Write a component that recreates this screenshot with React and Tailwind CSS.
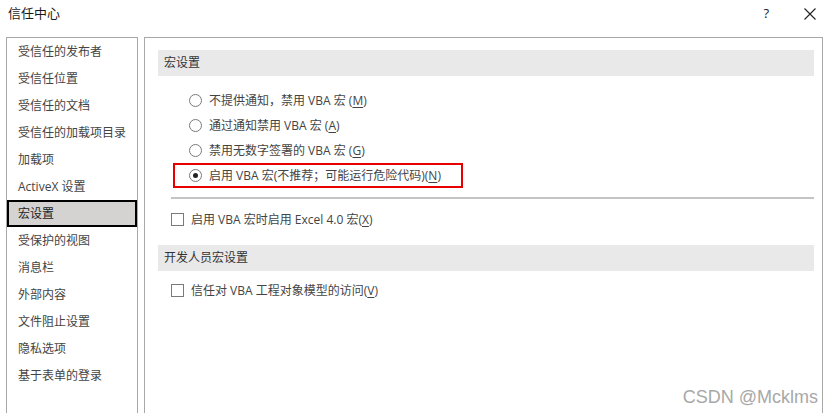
import React from "react";

const navItems = [
  "受信任的发布者",
  "受信任位置",
  "受信任的文档",
  "受信任的加载项目录",
  "加载项",
  "ActiveX 设置",
  "宏设置",
  "受保护的视图",
  "消息栏",
  "外部内容",
  "文件阻止设置",
  "隐私选项",
  "基于表单的登录",
];

function Radio({ checked }) {
  return (
    <span className="relative flex h-[13px] w-[13px] shrink-0 items-center justify-center rounded-full border border-[#7a7a7a] bg-white">
      {checked && <span className="h-[5px] w-[5px] rounded-full bg-[#222]" />}
    </span>
  );
}

function Check() {
  return <span className="h-[13px] w-[13px] shrink-0 border border-[#7a7a7a] bg-white" />;
}

function Acc({ k }) {
  return (
    <span>
      (<span className="underline underline-offset-2">{k}</span>)
    </span>
  );
}

const radios = [
  { label: <>不提供通知，禁用 VBA 宏 <Acc k="M" /></> },
  { label: <>通过通知禁用 VBA 宏 <Acc k="A" /></> },
  { label: <>禁用无数字签署的 VBA 宏 <Acc k="G" /></> },
  { label: <>启用 VBA 宏(不推荐；可能运行危险代码)<Acc k="N" /></>, checked: true },
];

export default function App() {
  return (
    <div
      className="relative h-[413px] w-[833px] overflow-hidden bg-white text-[12px] text-[#444]"
      style={{ fontFamily: '"Open Sans", "Noto Sans CJK SC", sans-serif' }}
    >
      <div className="flex h-[37px] items-start justify-between">
        <div className="pl-[8px] pt-[4px] text-[13px] text-[#1a1a1a]">信任中心</div>
        <div className="flex items-center pt-[4px]">
          <span className="mr-[35px] text-[13px] text-[#1a1a1a]">?</span>
          <svg width="12" height="12" viewBox="0 0 12 12" className="mr-[17px] mt-[1px]">
            <path d="M0.5 0.5 L11.5 11.5 M11.5 0.5 L0.5 11.5" stroke="#222" strokeWidth="1.1" />
          </svg>
        </div>
      </div>

      <div className="flex gap-[6px] pl-[6px]">
        <div className="h-[390px] w-[132px] border border-[#a8a8a8] bg-white">
          {navItems.map((t, i) => (
            <div
              key={t}
              className={
                "flex h-[27px] items-center border-2 pl-[9px] " +
                (i === 6 ? "border-black bg-[#d4d3d1] text-[#222]" : "border-transparent")
              }
            >
              {t}
            </div>
          ))}
        </div>

        <div className="h-[390px] w-[679px] border border-[#a8a8a8] bg-white">
          <div className="ml-[13px] mr-[8px] mt-[12px] flex h-[26px] items-center bg-[#e9e9e9] pl-[6px] text-[#333]">
            宏设置
          </div>
          <div className="mt-[12px] flex flex-col">
            {radios.map((r, i) => (
              <div
                key={i}
                className={
                  "ml-[28px] flex h-[25px] w-[290px] items-center gap-[7px] border-2 pl-[14px] " +
                  (r.checked ? "border-[#e80000]" : "border-transparent")
                }
              >
                <Radio checked={r.checked} />
                <span className="whitespace-nowrap">{r.label}</span>
              </div>
            ))}
          </div>
          <div className="ml-[26px] mr-[8px] mt-[9px] h-[2px] bg-[#c4c4c4]" />
          <div className="ml-[26px] mt-[8px] flex h-[25px] items-center gap-[7px]">
            <Check />
            <span className="whitespace-nowrap">
              启用 VBA 宏时启用 Excel 4.0 宏<Acc k="X" />
            </span>
          </div>
          <div className="ml-[13px] mr-[8px] mt-[13px] flex h-[26px] items-center bg-[#e9e9e9] pl-[6px] text-[#333]">
            开发人员宏设置
          </div>
          <div className="ml-[26px] mt-[7px] flex h-[25px] items-center gap-[7px]">
            <Check />
            <span className="whitespace-nowrap">
              信任对 VBA 工程对象模型的访问<Acc k="V" />
            </span>
          </div>
        </div>
      </div>

      <div
        className="absolute bottom-[5px] right-[15px] text-[18px] leading-[22px] text-[#a8a8a8]"
        style={{ fontFamily: '"Liberation Sans", Arial, sans-serif' }}
      >
        CSDN @Mcklms
      </div>
    </div>
  );
}
